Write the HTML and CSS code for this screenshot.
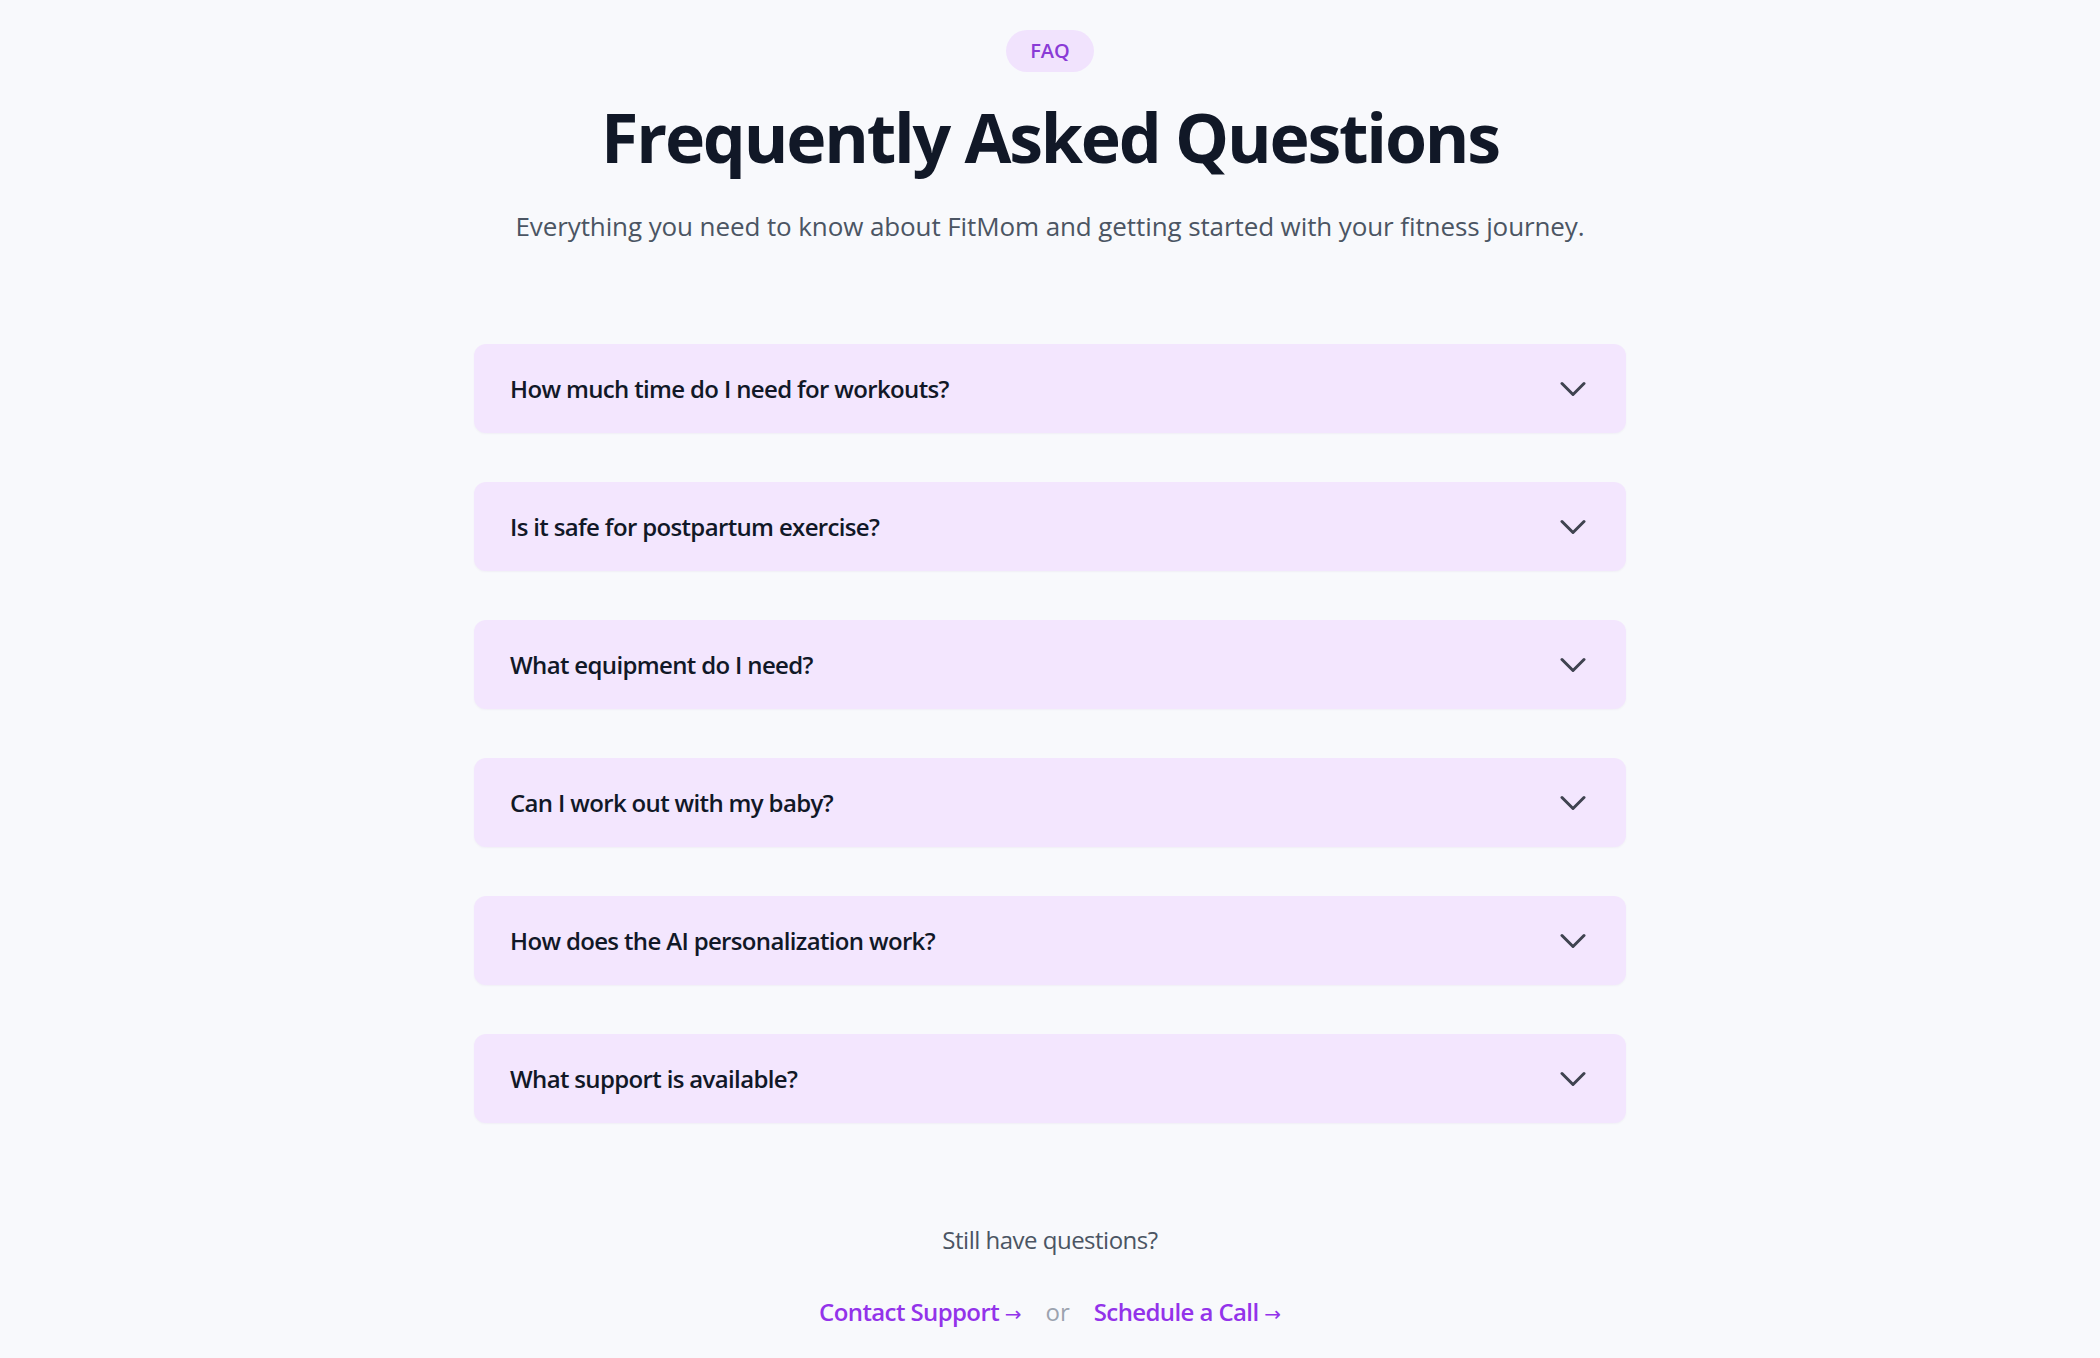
FILE: index.html
```html
<!DOCTYPE html>
<html lang="en">
<head>
<meta charset="utf-8">
<title>FAQ</title>
<link rel="stylesheet" href="styles.css">
</head>
<body>
<section class="faq">
  <header class="faq-head">
    <span class="badge">FAQ</span>
    <h1 class="title">Frequently Asked Questions</h1>
    <p class="subtitle">Everything you need to know about FitMom and getting started with your fitness journey.</p>
  </header>

  <div class="list">
    <div class="item"><span class="q">How much time do I need for workouts?</span><svg class="chev" viewBox="0 0 26 16"><path d="M2 2.5 13 13.5 24 2.5"/></svg></div>
    <div class="item"><span class="q">Is it safe for postpartum exercise?</span><svg class="chev" viewBox="0 0 26 16"><path d="M2 2.5 13 13.5 24 2.5"/></svg></div>
    <div class="item"><span class="q">What equipment do I need?</span><svg class="chev" viewBox="0 0 26 16"><path d="M2 2.5 13 13.5 24 2.5"/></svg></div>
    <div class="item"><span class="q">Can I work out with my baby?</span><svg class="chev" viewBox="0 0 26 16"><path d="M2 2.5 13 13.5 24 2.5"/></svg></div>
    <div class="item"><span class="q">How does the AI personalization work?</span><svg class="chev" viewBox="0 0 26 16"><path d="M2 2.5 13 13.5 24 2.5"/></svg></div>
    <div class="item"><span class="q">What support is available?</span><svg class="chev" viewBox="0 0 26 16"><path d="M2 2.5 13 13.5 24 2.5"/></svg></div>
  </div>

  <footer class="more">
    <p class="still">Still have questions?</p>
    <div class="links">
      <a class="link" href="#">Contact Support <span class="arrow">→</span></a>
      <span class="or">or</span>
      <a class="link" href="#">Schedule a Call <span class="arrow">→</span></a>
    </div>
  </footer>
</section>
</body>
</html>
```

FILE: styles.css
```css
html, body {
  margin: 0;
  padding: 0;
}
body {
  background: #f8f9fc;
  font-family: "Open Sans", "Noto Sans", sans-serif;
  color: #111827;
}
.faq {
  display: flex;
  flex-direction: column;
  align-items: center;
  padding-top: 30px;
}
.faq-head {
  display: flex;
  flex-direction: column;
  align-items: center;
}
.badge {
  display: inline-block;
  background: #f1e3fd;
  color: #8a3bd6;
  font-size: 20px;
  font-weight: 600;
  line-height: 26px;
  padding: 8px 24px;
  border-radius: 999px;
}
.title {
  margin: 0;
  margin-top: 15px;
  font-size: 68px;
  line-height: 100px;
  font-weight: 700;
  letter-spacing: -2.2px;
  color: #111827;
}
.subtitle {
  margin: 0;
  margin-top: 21px;
  font-size: 26px;
  line-height: 36px;
  letter-spacing: -0.1px;
  color: #4b5563;
}
.list {
  width: 1152px;
  margin-top: 100px;
  display: flex;
  flex-direction: column;
  gap: 49px;
}
.item {
  height: 89px;
  box-sizing: border-box;
  background: #f3e6fe;
  border-radius: 12px;
  display: flex;
  align-items: center;
  justify-content: space-between;
  padding: 0 40px 0 36px;
  box-shadow: 0 1px 2px rgba(120, 80, 160, 0.06);
}
.q {
  font-size: 24px;
  font-weight: 600;
  letter-spacing: -0.65px;
  color: #111827;
}
.chev {
  width: 26px;
  height: 16px;
  fill: none;
  stroke: #3f4350;
  stroke-width: 3;
  stroke-linecap: round;
  stroke-linejoin: round;
}
.more {
  margin-top: 100px;
  display: flex;
  flex-direction: column;
  align-items: center;
}
.still {
  margin: 0;
  font-size: 24px;
  line-height: 34px;
  letter-spacing: -0.5px;
  color: #4b5563;
}
.links {
  margin-top: 38px;
  display: flex;
  align-items: center;
  gap: 24px;
}
.link {
  color: #9333ea;
  font-size: 24px;
  font-weight: 600;
  letter-spacing: -0.6px;
  text-decoration: none;
}
.arrow {
  font-family: "DejaVu Sans", sans-serif;
  font-size: 20px;
  font-weight: 400;
  letter-spacing: 0;
}
.or {
  color: #9ca3af;
  font-size: 24px;
}
```
